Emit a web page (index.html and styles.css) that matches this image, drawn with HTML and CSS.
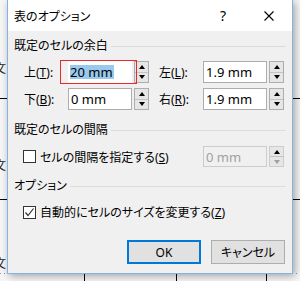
FILE: index.html
```html
<!DOCTYPE html>
<html lang="ja">
<head>
  <meta charset="UTF-8">
  <title>表のオプション</title>
<link rel="stylesheet" href="styles.css">
</head>
<body>

  <!-- document behind the dialog -->
  <div class="doc">
    <span class="hline" style="top:98px"></span>
    <span class="hline" style="top:199px"></span>
    <span class="dots"></span>
    <span class="vline" style="left:84px"></span>
    <span class="vline" style="left:176px"></span>
    <span class="vline" style="left:266px"></span>
    <span class="frag" style="top:62px">文</span>
    <span class="frag" style="top:159px">文</span>
    <span class="frag" style="top:257px">文</span>
  </div>

  <div class="dialog">
    <div class="titlebar">
      <span class="title">表のオプション</span>
      <span class="tbtn help">?</span>
      <span class="tbtn close">
        <svg width="10" height="10" viewBox="0 0 10 10"><path d="M0.5 0.5L9.5 9.5M9.5 0.5L0.5 9.5" stroke="#000" stroke-width="1.1" fill="none"/></svg>
      </span>
    </div>

    <div class="content">
      <div class="group">既定のセルの余白</div>

      <div class="field first">
        <span class="label">上(<u>T</u>):</span>
        <span class="input marked"><span class="sel">20 mm</span></span>
        <span class="spin"><i class="up"></i><i class="down"></i></span>
        <span class="label right">左(<u>L</u>):</span>
        <span class="input">1.9 mm</span>
        <span class="spin"><i class="up"></i><i class="down"></i></span>
        <span class="redbox"></span>
      </div>

      <div class="field">
        <span class="label">下(<u>B</u>):</span>
        <span class="input">0 mm</span>
        <span class="spin"><i class="up"></i><i class="down"></i></span>
        <span class="label right">右(<u>R</u>):</span>
        <span class="input">1.9 mm</span>
        <span class="spin"><i class="up"></i><i class="down"></i></span>
      </div>

      <div class="group gap2">既定のセルの間隔</div>

      <div class="checkrow spaced">
        <span class="box"></span>
        <span class="ctext">セルの間隔を指定する(<u>S</u>)</span>
        <span class="input off">0 mm</span>
        <span class="spin off"><i class="up"></i><i class="down"></i></span>
      </div>

      <div class="group gap3">オプション</div>

      <div class="checkrow auto">
        <span class="box">
          <svg width="11" height="11" viewBox="0 0 11 11"><path d="M1.5 5.5L4 8.5L9.5 1.5" stroke="#333" stroke-width="1.2" fill="none"/></svg>
        </span>
        <span class="ctext">自動的にセルのサイズを変更する(<u>Z</u>)</span>
      </div>

      <div class="buttons">
        <button class="ok">OK</button>
        <button>キャンセル</button>
      </div>
    </div>
  </div>

</body>
</html>
```

FILE: styles.css
```css
body {
  margin: 0;
  width: 300px;
  height: 281px;
  overflow: hidden;
  position: relative;
  background: #f6f6f6;
  font-family: "Noto Sans", "Noto Sans CJK JP", sans-serif;
  font-size: 12px;
  font-feature-settings: "palt";
  color: #000;
}

/* background document */
.doc .hline {
  position: absolute;
  left: 0;
  width: 300px;
  height: 1px;
  background: #000;
}

.doc .vline {
  position: absolute;
  top: 273px;
  width: 1px;
  height: 8px;
  background: #000;
}

.doc .dots {
  position: absolute;
  top: 273px;
  left: 0;
  width: 300px;
  height: 1px;
  background: repeating-linear-gradient(to right, #999 0 1px, transparent 1px 4px);
}

.doc .frag {
  position: absolute;
  left: -6px;
  font-size: 12px;
  line-height: 14px;
  color: #222;
}

.dialog {
  position: relative;
  margin-left: 7px;
  width: 286px;
  height: 274px;
  box-sizing: border-box;
  border: 1px solid #7fb5e9;
  border-top: none;
  background: #f0f0f0;
  box-shadow: 2px 2px 8px rgba(0,0,0,0.35);
  display: flex;
  flex-direction: column;
}

.titlebar {
  height: 31px;
  background: #fff;
  display: flex;
  align-items: center;
  padding-left: 6px;
}

.title {
  flex: 1;
  font-size: 12px;
}

.tbtn {
  width: 46px;
  height: 31px;
  display: flex;
  align-items: center;
  justify-content: center;
}

.help {
  font-size: 14px;
}

.content {
  flex: 1;
  padding: 7px 6px 0 6px;
}

.group {
  display: flex;
  align-items: center;
  height: 16px;
  line-height: 16px;
}

.group::after {
  content: "";
  flex: 1;
  height: 1px;
  background: #dcdcdc;
  margin-left: 3px;
}

.gap2 { margin-top: 12px; }
.gap3 { margin-top: 11px; }

.field {
  position: relative;
  display: flex;
  align-items: center;
  height: 22px;
  padding-left: 10px;
  margin-top: 5px;
}

.field.first { margin-top: 7px; }

.label {
  width: 44px;
}

.label.right {
  margin-left: 10px;
}

u {
  text-decoration: underline;
  text-underline-offset: 1px;
}

.input {
  width: 64px;
  height: 22px;
  box-sizing: border-box;
  border: 1px solid #adadad;
  background: #fff;
  padding-left: 2px;
  display: flex;
  align-items: center;
  font-size: 13px;
}

.input.marked {
  border-color: #fff;
  padding-left: 1px;
}

.sel {
  background: #99c9ef;
  line-height: 14px;
  padding: 0 1px 0 0;
}

.input.off {
  height: 21px;
  border-color: #cccccc;
  background: #f0f0f0;
  color: #a0a0a0;
  margin-left: auto;
}

.redbox {
  position: absolute;
  left: 46px;
  top: -1px;
  width: 77px;
  height: 24px;
  border: 1px solid #e32b2b;
  box-sizing: border-box;
}

.spin {
  margin-left: 2px;
  width: 15px;
  height: 22px;
  box-sizing: border-box;
  border: 1px solid #adadad;
  background: #e6e6e6;
  display: flex;
  flex-direction: column;
}

.spin.off {
  height: 21px;
  border-color: #cccccc;
  margin-right: 2px;
}

.spin i {
  flex: 1;
  display: flex;
  align-items: center;
  justify-content: center;
}

.spin i.up {
  border-bottom: 1px solid #c4c4c4;
}

.spin i::before {
  content: "";
  border-left: 3.5px solid transparent;
  border-right: 3.5px solid transparent;
}

.spin i.up::before {
  border-bottom: 4px solid #000;
}

.spin i.down::before {
  border-top: 4px solid #000;
}

.spin.off i.down::before {
  border-top-color: #a0a0a0;
}

.checkrow {
  display: flex;
  align-items: center;
  padding-left: 9px;
}

.checkrow.spaced {
  height: 21px;
  margin-top: 8px;
}

.checkrow.auto {
  height: 16px;
  margin-top: 10px;
}

.box {
  width: 13px;
  height: 13px;
  box-sizing: border-box;
  border: 1px solid #333;
  background: #fff;
  display: flex;
  align-items: center;
  justify-content: center;
  margin-right: 4px;
}

.buttons {
  display: flex;
  justify-content: flex-end;
  gap: 10px;
  margin-top: 20px;
  margin-right: 1px;
}

button {
  width: 74px;
  height: 24px;
  box-sizing: border-box;
  border: 1px solid #adadad;
  background: #e1e1e1;
  font-family: "Noto Sans", "Noto Sans CJK JP", sans-serif;
  font-size: 12px;
  font-feature-settings: "palt";
  padding: 0;
}

button.ok {
  border: 2px solid #0078d7;
}
```
